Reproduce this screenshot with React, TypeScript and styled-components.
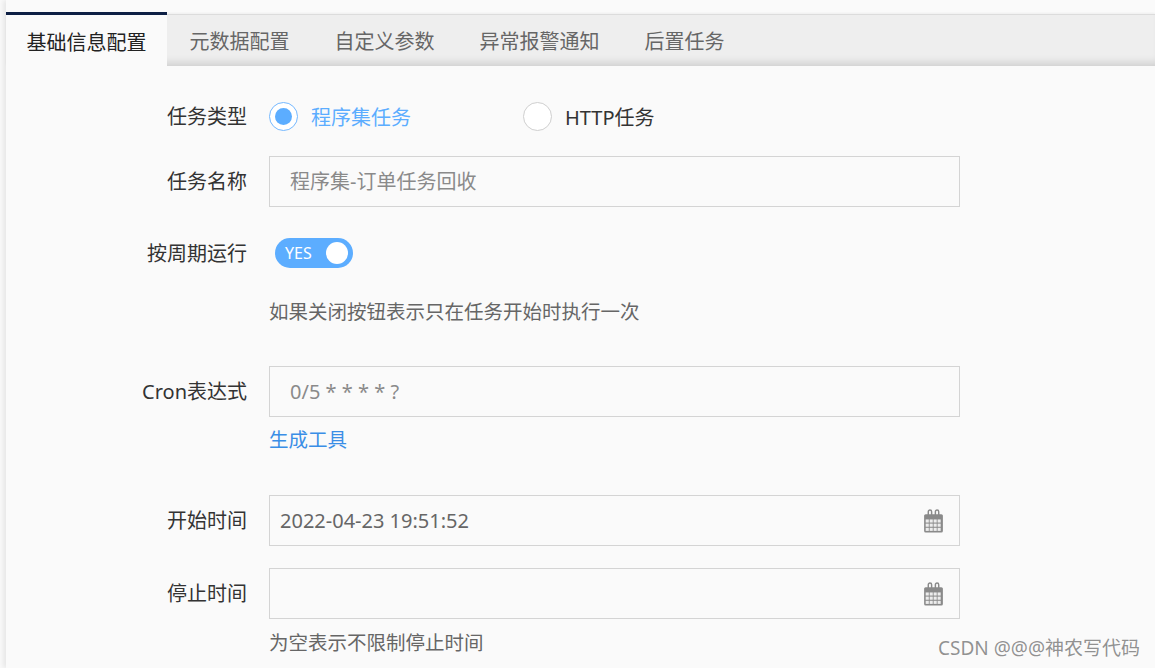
import styled, { createGlobalStyle } from 'styled-components';

const GlobalStyle = createGlobalStyle`
  html, body {
    margin: 0;
    padding: 0;
    background: #fafafa;
    height: 668px;
    overflow: hidden;
  }
  body {
    font-family: "Noto Sans", "Noto Sans CJK SC", sans-serif;
    color: #333;
  }
  * { box-sizing: border-box; }
`;

const Page = styled.div`
  position: relative;
  height: 668px;
  margin-left: 6px;
  padding-top: 14px;
  background: #fafafa;
  box-shadow: -3px 0 5px rgba(0, 0, 0, 0.08);
`;

const TabBar = styled.div`
  display: flex;
  height: 52px;
  background: #eeeeee;
  border-top: 1px solid #dcdcdc;
  box-shadow: inset 0 -9px 8px -6px rgba(0, 0, 0, 0.14), 0 -1px 2px rgba(0, 0, 0, 0.05);
`;

const Tab = styled.div<{ $active?: boolean }>`
  display: flex;
  align-items: center;
  padding: 0 ${p => (p.$active ? 20.5 : 22.5)}px;
  font-size: 20px;
  color: ${p => (p.$active ? '#222' : '#666')};
  ${p =>
    p.$active &&
    `
    margin-top: -3px;
    height: 55px;
    border-top: 3px solid #0d1f44;
    background: #fafafa;
  `}
`;

const Form = styled.div`
  display: flex;
  flex-direction: column;
`;

const Row = styled.div<{ $mt: number; $h?: number }>`
  display: grid;
  grid-template-columns: 241px 691px;
  column-gap: 22px;
  align-items: center;
  margin-top: ${p => p.$mt}px;
  min-height: ${p => p.$h ?? 24}px;
`;

const Label = styled.div`
  text-align: right;
  font-size: 20px;
  color: #333;
  margin-top: -2px;
`;

const RadioGroup = styled.div`
  display: flex;
  align-items: center;
`;

const RadioOption = styled.label<{ $checked?: boolean }>`
  display: flex;
  align-items: center;
  gap: 13px;
  margin-right: 112px;
  font-size: 20px;
  color: ${p => (p.$checked ? '#5cadff' : '#333')};
`;

const RadioCircle = styled.span<{ $checked?: boolean }>`
  display: flex;
  align-items: center;
  justify-content: center;
  width: 29px;
  height: 29px;
  border-radius: 50%;
  background: #fff;
  border: 1px solid ${p => (p.$checked ? '#74b8ff' : '#cfcfcf')};

  &::after {
    content: '';
    display: ${p => (p.$checked ? 'block' : 'none')};
    width: 17px;
    height: 17px;
    border-radius: 50%;
    background: #5cadff;
  }
`;

const TextInput = styled.input<{ $pad?: number }>`
  width: 691px;
  height: 51px;
  border: 1px solid #d4d4d4;
  background: transparent;
  padding: 0 ${p => p.$pad ?? 20}px;
  font-family: inherit;
  font-size: 20px;
  color: #666;
  outline: none;

  &::placeholder {
    color: #8a8a8a;
  }
`;

const DateBox = styled.div`
  display: flex;
  align-items: center;
  width: 691px;
  height: 51px;
  border: 1px solid #d4d4d4;
  padding: 0 15px 0 10px;
`;

const DateInput = styled.input`
  flex: 1;
  border: none;
  background: transparent;
  font-family: inherit;
  font-size: 20px;
  color: #666;
  outline: none;
  padding: 0;
`;

const Switch = styled.div`
  display: flex;
  align-items: center;
  justify-content: space-between;
  width: 78px;
  height: 30px;
  margin-left: 6px;
  padding: 0 5px 0 10px;
  border-radius: 15px;
  background: #5cadff;
  color: #fff;
  font-size: 16px;

  &::after {
    content: '';
    width: 22px;
    height: 22px;
    border-radius: 50%;
    background: #fff;
  }
`;

const Help = styled.div`
  grid-column: 2;
  font-size: 19.5px;
  color: #666;
  line-height: 24px;
`;

const Link = styled.a`
  grid-column: 2;
  font-size: 19.5px;
  line-height: 24px;
  color: #3a8ee6;
  text-decoration: none;
`;

const Watermark = styled.div`
  position: absolute;
  right: 15px;
  bottom: 7px;
  font-size: 19px;
  color: rgba(110, 110, 110, 0.75);
`;

const CalendarIcon = () => (
  <svg width="21" height="24" viewBox="0 0 20 23">
    <rect x="1" y="5" width="18" height="17.5" rx="1.5" fill="#8a8a8a" />
    <path d="M5 6V2.6a1.6 1.6 0 0 1 3.2 0V6" fill="none" stroke="#8a8a8a" strokeWidth="1.4" />
    <path d="M11.8 6V2.6a1.6 1.6 0 0 1 3.2 0V6" fill="none" stroke="#8a8a8a" strokeWidth="1.4" />
    {[10, 14, 18].map(y =>
      [2.5, 6.3, 10.1, 13.9].map(x => (
        <rect key={`${x}-${y}`} x={x} y={y} width="3" height="3" fill="#ececec" />
      ))
    )}
  </svg>
);

const tabs = ['基础信息配置', '元数据配置', '自定义参数', '异常报警通知', '后置任务'];

export default function App() {
  return (
    <>
      <GlobalStyle />
      <Page>
        <TabBar>
          {tabs.map((t, i) => (
            <Tab key={t} $active={i === 0}>
              {t}
            </Tab>
          ))}
        </TabBar>
        <Form>
          <Row $mt={30} $h={40}>
            <Label>任务类型</Label>
            <RadioGroup>
              <RadioOption $checked>
                <RadioCircle $checked />
                程序集任务
              </RadioOption>
              <RadioOption>
                <RadioCircle />
                HTTP任务
              </RadioOption>
            </RadioGroup>
          </Row>
          <Row $mt={20}>
            <Label>任务名称</Label>
            <TextInput placeholder="程序集-订单任务回收" />
          </Row>
          <Row $mt={26} $h={40}>
            <Label>按周期运行</Label>
            <Switch>YES</Switch>
          </Row>
          <Row $mt={27}>
            <Help>如果关闭按钮表示只在任务开始时执行一次</Help>
          </Row>
          <Row $mt={42}>
            <Label>Cron表达式</Label>
            <TextInput placeholder="0/5 * * * * ?" />
          </Row>
          <Row $mt={11}>
            <Link href="#">生成工具</Link>
          </Row>
          <Row $mt={43}>
            <Label>开始时间</Label>
            <DateBox>
              <DateInput defaultValue="2022-04-23 19:51:52" />
              <CalendarIcon />
            </DateBox>
          </Row>
          <Row $mt={22}>
            <Label>停止时间</Label>
            <DateBox>
              <DateInput />
              <CalendarIcon />
            </DateBox>
          </Row>
          <Row $mt={12}>
            <Help>为空表示不限制停止时间</Help>
          </Row>
        </Form>
        <Watermark>CSDN @@@神农写代码</Watermark>
      </Page>
    </>
  );
}
